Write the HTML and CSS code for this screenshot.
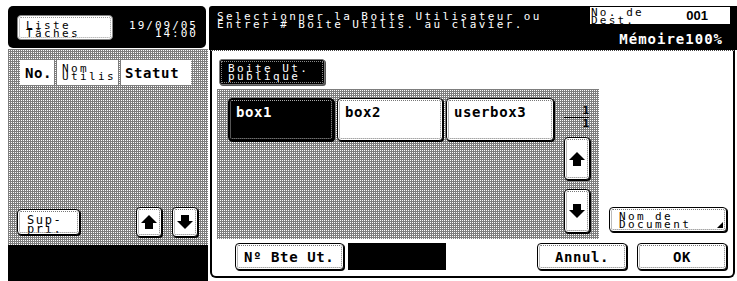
FILE: index.html
```
<!DOCTYPE html>
<html lang="fr">
<head>
<meta charset="utf-8">
<title>Boite Utilisateur</title>
<link rel="stylesheet" href="styles.css">
</head>
<body>
<div class="screen">
  <div class="left">
    <div class="hdr">
      <div class="btn jobs small">Liste<br>Tâches</div>
      <div class="clock small">19/09/05<br>14:00</div>
    </div>
    <div class="lpane dither">
      <div class="cols">
        <div class="col c-no bold">No.</div>
        <div class="col c-nom small">Nom<br>Utilis</div>
        <div class="col c-stat bold">Statut</div>
      </div>
      <div class="lbtns">
        <div class="btn sup small">Sup-<br>pri.</div>
        <div class="btn arrow"><svg width="16" height="14" viewBox="0 0 16 14"><path d="M8 0 L16 8 L12 8 L12 14 L4 14 L4 8 L0 8 Z" fill="#000"/></svg></div>
        <div class="btn arrow"><svg width="16" height="14" viewBox="0 0 16 14"><path d="M8 14 L16 6 L12 6 L12 0 L4 0 L4 6 L0 6 Z" fill="#000"/></svg></div>
      </div>
    </div>
    <div class="lfoot"></div>
  </div>
  <div class="right">
    <div class="msg">
      <div class="msg-text small">Selectionner la Boite Utilisateur ou<br>Entrer # Boite Utilis. au clavier.</div>
      <div class="msg-side">
        <div class="dest"><span class="small">No. de<br>Dest.</span><span class="dest-num">001</span></div>
        <div class="mem bold">Mémoire100%</div>
      </div>
    </div>
    <div class="panel">
      <div class="tab small">Boite Ut.<br>publique</div>
      <div class="mid">
        <div class="boxarea dither">
          <div class="boxes">
            <div class="box sel bold">box1</div>
            <div class="box bold">box2</div>
            <div class="box wide bold">userbox3</div>
          </div>
          <div class="pager">
            <div class="frac bold"><span class="num">1</span><span class="den">1</span></div>
            <div class="btn arrow tall"><svg width="16" height="14" viewBox="0 0 16 14"><path d="M8 0 L16 8 L12 8 L12 14 L4 14 L4 8 L0 8 Z" fill="#000"/></svg></div>
            <div class="btn arrow tall"><svg width="16" height="14" viewBox="0 0 16 14"><path d="M8 14 L16 6 L12 6 L12 0 L4 0 L4 6 L0 6 Z" fill="#000"/></svg></div>
          </div>
        </div>
        <div class="btn docname small">Nom de<br>Document</div>
      </div>
      <div class="bottom">
        <div class="btn nobox bold">Nº Bte Ut.</div>
        <div class="field"></div>
        <div class="btn act annul bold">Annul.</div>
        <div class="btn act ok bold">OK</div>
      </div>
    </div>
  </div>
</div>
</body>
</html>
```
FILE: styles.css
```
* { box-sizing: border-box; }
html, body { margin: 0; padding: 0; }
body {
  width: 737px;
  height: 281px;
  overflow: hidden;
  background: #fff;
  color: #000;
  font-family: "DejaVu Sans Mono", monospace;
}
.screen { display: flex; height: 281px; }

.small {
  font-family: "DejaVu Sans Mono", monospace;
  font-size: 11px;
  letter-spacing: 2.4px;
  line-height: 8px;
}
.bold {
  font-family: "DejaVu Sans Mono", monospace;
  font-weight: bold;
  font-size: 14px;
  letter-spacing: 0.6px;
  line-height: 14px;
}
.dither {
  background-color: #fff;
  background-image:
    linear-gradient(90deg, #7d7d7d 1px, transparent 1px),
    linear-gradient(#7d7d7d 1px, transparent 1px);
  background-size: 2px 2px;
}
.btn {
  background: #fff;
  border: 1px solid #000;
  border-radius: 4px;
  outline: 1px dotted #777;
  outline-offset: -3px;
  box-shadow: 1px 1px 0 #000;
}

/* left column */
.left {
  width: 200px;
  margin-left: 8px;
  display: flex;
  flex-direction: column;
  padding-top: 6px;
}
.hdr {
  width: 198px;
  height: 42px;
  background: #000;
  border-radius: 5px;
  display: flex;
  justify-content: space-between;
  align-items: flex-start;
  padding: 9px 8px 0 9px;
}
.jobs {
  width: 96px;
  height: 25px;
  padding: 6px 0 0 8px;
  border-color: #888;
  outline-color: #999;
  box-shadow: none;
}
.clock {
  color: #fff;
  text-align: right;
  padding-top: 7px;
  letter-spacing: 2px;
}
.lpane {
  flex: 1;
  margin-top: 1px;
  display: flex;
  flex-direction: column;
  padding-top: 11px;
}
.cols { display: flex; gap: 3px; margin-left: 12px; }
.col {
  background: #fff;
  height: 25px;
  padding-left: 5px;
}
.c-no { width: 34px; padding-top: 6px; }
.c-nom { width: 61px; padding-top: 5px; }
.c-stat { width: 70px; padding-top: 6px; padding-left: 4px; }
.lbtns {
  margin-top: auto;
  display: flex;
  align-items: center;
  padding: 0 0 8px 9px;
}
.sup {
  width: 63px;
  height: 26px;
  padding: 6px 0 0 9px;
  font-size: 12px;
  letter-spacing: 1.6px;
  line-height: 9px;
}
.arrow {
  width: 26px;
  height: 30px;
  display: flex;
  align-items: center;
  justify-content: center;
}
.lbtns .arrow { margin-left: 10px; }
.lbtns .sup + .arrow { margin-left: 56px; }
.lfoot { height: 36px; background: #000; }

/* right column */
.right {
  width: 529px;
  display: flex;
  flex-direction: column;
}
.msg {
  margin: 6px 0 0 1px;
  height: 44px;
  background: #000;
  color: #fff;
  display: flex;
  justify-content: space-between;
  padding: 1px 7px 0 8px;
  border-top-left-radius: 3px;
}
.msg-text { padding-top: 6px; }
.msg-side {
  display: flex;
  flex-direction: column;
  align-items: flex-end;
}
.dest {
  width: 140px;
  height: 17px;
  background: #fff;
  color: #000;
  display: flex;
  justify-content: space-between;
  align-items: flex-start;
  padding: 2px 22px 0 1px;
}
.dest .small { letter-spacing: 2.2px; }
.dest-num {
  font-family: "Liberation Sans", Arial, sans-serif;
  font-weight: bold;
  font-size: 13px;
  line-height: 14px;
}
.mem {
  margin-top: 8px;
  margin-right: 7px;
  letter-spacing: 1px;
}
.panel {
  margin: 0 2px 3px 2px;
  flex: 1;
  border: 2px solid #000;
  border-top: 1px dotted #444;
  border-radius: 0 0 6px 6px;
  padding: 8px 6px 0 5px;
  display: flex;
  flex-direction: column;
}
.tab {
  margin-left: 2px;
  width: 106px;
  height: 26px;
  background: #000;
  color: #fff;
  border: 1px solid #777;
  border-radius: 3px;
  outline: 1px dotted #888;
  outline-offset: -3px;
  padding: 5px 0 0 8px;
  box-shadow: 1px 1px 0 #555;
}
.mid {
  display: flex;
  margin-top: 4px;
}
.boxarea {
  width: 382px;
  height: 150px;
  display: flex;
  padding: 9px 0 0 11px;
}
.boxes { display: flex; gap: 3px; }
.box {
  width: 106px;
  height: 43px;
  background: #fff;
  border: 1px solid #000;
  border-radius: 4px;
  outline: 1px dotted #777;
  outline-offset: -3px;
  box-shadow: 1px 1px 0 #000;
  padding: 6px 0 0 7px;
}
.box.wide { width: 108px; }
.box.sel { background: #000; color: #fff; outline-color: #aaa; }
.pager {
  margin-left: 10px;
  width: 26px;
  display: flex;
  flex-direction: column;
}
.frac {
  margin-top: 8px;
  height: 22px;
  display: flex;
  flex-direction: column;
  align-items: stretch;
  text-align: right;
  font-size: 11px;
  line-height: 10px;
  letter-spacing: 0;
  padding-right: 1px;
}
.frac .num { border-bottom: 1px solid #000; padding-bottom: 1px; }
.frac .den { padding-top: 1px; }
.arrow.tall { height: 43px; margin-top: 9px; }
.pager .arrow.tall + .arrow.tall { margin-top: 9px; height: 44px; }
.docname {
  align-self: flex-end;
  margin: 0 0 7px 10px;
  width: 118px;
  height: 25px;
  padding: 5px 0 0 9px;
  position: relative;
}
.docname::after {
  content: "";
  position: absolute;
  right: 3px;
  bottom: 3px;
  border-left: 6px solid transparent;
  border-bottom: 6px solid #000;
}
.bottom {
  display: flex;
  margin-top: 4px;
  height: 27px;
}
.nobox {
  margin-left: 18px;
  width: 109px;
  padding: 6px 0 0 8px;
}
.field {
  margin-left: 4px;
  width: 98px;
  background: #000;
}
.act {
  width: 90px;
  text-align: center;
  padding-top: 6px;
}
.annul { margin-left: auto; }
.ok { margin-left: 10px; }
```
